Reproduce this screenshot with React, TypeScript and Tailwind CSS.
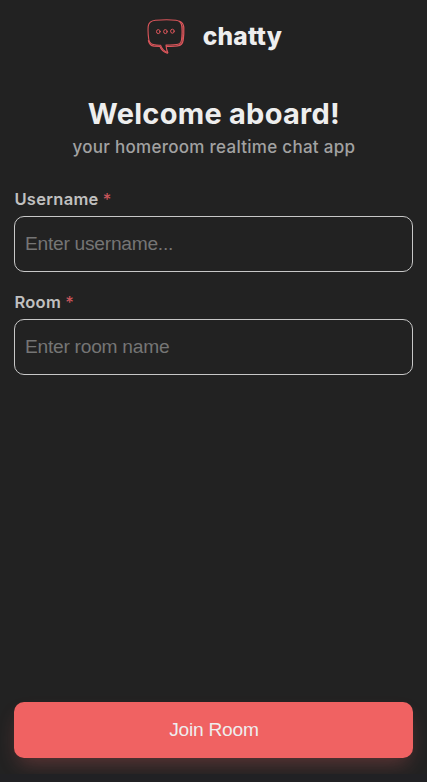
import React from "react";

function Logo() {
  return (
    <svg className="mt-px h-9 w-[38px] shrink-0" viewBox="0 0 38 36" fill="none" stroke="#dc565b" strokeLinecap="round" strokeLinejoin="round">
      <path d="M8.500 1.300C15 .7 23 .6 29 1.200c3.500.4 5.500 2.600 5.800 6.200.4 4.200.3 9.600-.3 13.600-.5 2.800-2.300 4.300-5.200 4.600-3.500.4-6.500.3-10.300.5.2 2.700.5 5 1.900 7.600-3.600-1.500-6.100-3.900-7.200-7.400-2.600.1-5.100-.1-7.300-.7-2.900-.8-4.400-2.700-4.700-5.600C1.100 15.900.9 11 1.200 7.400 1.600 3.500 4.500 1.700 8.500 1.300Z" strokeWidth="1.100" />
      <path d="M32.500 2.200c3 1.300 4.100 3.200 4.300 6.200.2 4.300 0 8.500-.6 12.800-.5 3.400-2.200 5.500-5.600 5.800-3.600.5-7.400.2-11 .4M1.400 21.500c.8 3.600 2.600 5.300 5.500 5.600l6 .2c1.200 3.600 4 5.700 7.400 7" strokeWidth="1.200" />
      <path d="M35.700 7c.4 5 .2 9.800-.4 14.500-.6 3.200-2.300 4.600-5.200 4.800" strokeWidth=".8" />
      <ellipse cx="11.300" cy="12.600" rx="1.800" ry="2" strokeWidth="1" />
      <ellipse cx="18.400" cy="12.600" rx="1.800" ry="2" strokeWidth="1" />
      <ellipse cx="25.400" cy="12.200" rx="1.800" ry="2" strokeWidth="1" />
    </svg>
  );
}

type FieldProps = { id: string; label: string; placeholder: string };

function Field({ id, label, placeholder }: FieldProps) {
  return (
    <div className="flex h-[87px] flex-col">
      <label htmlFor={id} className="h-[31px] pt-0.5 font-['Inter',sans-serif] text-[16.500px] leading-6 font-semibold text-[#c0c0c0]">
        <span className="tracking-[0.300px]">{label}</span> <span className="font-medium text-[#c9555a]">*</span>
      </label>
      <input
        id={id}
        placeholder={placeholder}
        className="h-14 w-full rounded-[10px] border border-[#c8c8c8] bg-transparent px-[9.600px] font-['Liberation_Sans',sans-serif] text-[19.200px] tracking-[-0.260px] text-[#eeeeee] outline-none placeholder:text-[#757575]"
      />
    </div>
  );
}

export default function App() {
  return (
    <main className="flex h-[782px] w-full flex-col overflow-hidden border-b-8 border-[#212124] bg-[#222222] pr-[13.600px] pb-4 pl-[14.400px] font-['Inter',sans-serif]">
      <header className="flex h-[72px] items-start justify-center gap-[18px] pt-[18px] pl-px">
        <Logo />
        <span className="text-[24.500px] leading-9 font-extrabold tracking-[0.200px] text-[#eeeeee]">chatty</span>
      </header>
      <section className="pt-5 text-center whitespace-nowrap">
        <h1 className="pt-px text-[29px] leading-[42px] font-bold tracking-[0.250px] text-[#eeeeee]">Welcome aboard!</h1>
        <p className="text-[17px] leading-6 font-medium tracking-[0.280px] text-[#a2a2a2]">your homeroom realtime chat app</p>
      </section>
      <form className="flex flex-1 flex-col pt-[26px]" onSubmit={(e) => e.preventDefault()}>
        <div className="flex flex-col gap-4">
          <Field id="username" label="Username" placeholder="Enter username..." />
          <Field id="room" label="Room" placeholder="Enter room name" />
        </div>
        <button className="mt-auto h-14 w-full rounded-[10px] bg-[#f06262] font-['Liberation_Sans',sans-serif] text-[19.200px] tracking-[-0.250px] text-[#eeeeee] shadow-[0_10px_20px_-5px_rgba(240,98,98,0.3)]">
          Join Room
        </button>
      </form>
    </main>
  );
}
